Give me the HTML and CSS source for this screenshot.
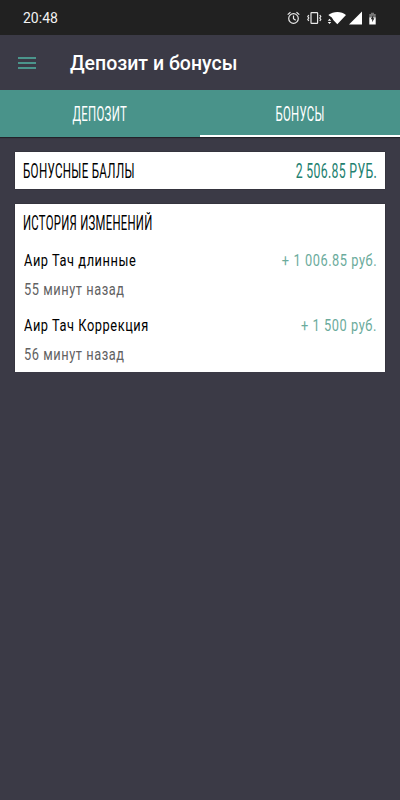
FILE: index.html
```
<!DOCTYPE html>
<html lang="ru">
<head>
  <meta charset="utf-8">
  <title>Депозит и бонусы</title>
  <link rel="stylesheet" href="styles.css">
</head>
<body>
  <div class="status-bar">
    <span class="time">20:48</span>
    <svg class="status-icons" width="94" height="16" viewBox="0 0 94 16">
      <!-- alarm -->
      <g fill="none" stroke="#e8e8e8" stroke-width="1.2">
        <circle cx="6.500" cy="8.500" r="4.800"/>
        <path d="M6.500 5.500v3.200l2.200 1.500M.7 4.600l2.800-2.400M12.300 4.600L9.500 2.200"/>
      </g>
      <!-- vibration -->
      <g fill="none" stroke="#e8e8e8" stroke-width="1.2">
        <rect x="24" y="2.600" width="6.600" height="10.800" rx=".6"/>
        <path d="M21.800 5l-1 1.500 1 1.500-1 1.500 1 1.500M32.800 5l1 1.500-1 1.500 1 1.500-1 1.500"/>
      </g>
      <!-- wifi, signal -->
      <path fill="#fff" d="M41.300 5C46.500 .9 54.500 .9 59 5L50.300 14.300 46.500 10.300 44.800 7.500z"/>
      <path fill="#fff" d="M40.800 10.700h3.400l-1.700-2zM40.800 12h3.400l-1.700 2z"/>
      <path fill="#fff" d="M75 1.600v13H62z"/>
      <!-- battery -->
      <path fill="#777" d="M82.300 4h1.700V2.700h3V4h1.700v4h-6.400z"/>
      <path fill="#fff" d="M82.300 7.500h6.400v7h-6.400z"/>
      <path fill="#222" d="M86.200 5l-2.500 4.300h1.500v3l2.200-4.100h-1.200z"/>
    </svg>
  </div>

  <div class="header">
    <div class="menu">
      <span></span>
      <span></span>
      <span></span>
    </div>
    <h1>Депозит и бонусы</h1>
  </div>

  <div class="tabs">
    <div class="tab"><span class="caps">ДЕПОЗИТ</span></div>
    <div class="tab active"><span class="caps">БОНУСЫ</span></div>
  </div>

  <div class="card balance">
    <span class="caps balance-title">БОНУСНЫЕ БАЛЛЫ</span>
    <span class="caps right sum">2 506.85 РУБ.</span>
  </div>

  <div class="card history">
    <h2 class="caps history-title">ИСТОРИЯ ИЗМЕНЕНИЙ</h2>
    <div class="row">
      <span class="text">Аир Тач длинные</span>
      <span class="text right amount">+ 1 006.85 руб.</span>
    </div>
    <div class="row date"><span class="text">55 минут назад</span></div>
    <div class="row second">
      <span class="text">Аир Тач Коррекция</span>
      <span class="text right amount">+ 1 500 руб.</span>
    </div>
    <div class="row date"><span class="text">56 минут назад</span></div>
  </div>
</body>
</html>
```
FILE: styles.css
```
body {
  margin: 0;
  background-color: #3b3a46;
  font-family: Roboto, sans-serif;
}

.status-bar {
  display: flex;
  justify-content: space-between;
  align-items: center;
  box-sizing: border-box;
  height: 35px;
  padding: 1px 19px 0 23px;
  background-color: #212121;
  color: #f2f2f2;
}

.time {
  font-size: 14px;
  line-height: 16px;
}

.header {
  display: flex;
  align-items: center;
  height: 55px;
  padding-left: 18px;
}

.menu {
  display: flex;
  flex-direction: column;
  gap: 3px;
  width: 18px;
  margin-right: 34px;
}

.menu span {
  height: 2px;
  background-color: #4b958c;
}

h1 {
  margin: 0;
  padding-top: 2px;
  color: #ffffff;
  font-size: 19.5px;
  font-weight: 500;
}

.tabs {
  display: flex;
  height: 47px;
  background-color: #49938a;
  box-shadow: 0 1px 1px rgba(0, 0, 0, 0.4);
}

.tab {
  display: flex;
  flex: 1;
  justify-content: center;
  align-items: center;
  box-sizing: border-box;
  padding-top: 4px;
  color: #ffffff;
  border-bottom: 2px solid transparent;
}

.tab.active {
  border-bottom-color: #ffffff;
}

/* narrow capitals */
.caps {
  display: inline-block;
  font-size: 19.5px;
  font-weight: 400;
  line-height: 22px;
  letter-spacing: 0.5px;
  white-space: nowrap;
  transform: scaleX(0.585);
  transform-origin: left center;
}

.tab .caps {
  transform-origin: center;
}

.card {
  box-sizing: border-box;
  margin: 15px 15px 0;
  padding: 0 8px;
  background-color: #ffffff;
  color: #000000;
  box-shadow: 0 0 1px rgba(0, 0, 0, 0.6);
}

.balance {
  display: flex;
  justify-content: space-between;
  align-items: center;
  height: 37px;
  padding-top: 2px;
}

.balance-title {
  transform: scaleX(0.595);
}

.sum {
  color: #22806f;
  transform: scaleX(0.63);
}

.history {
  height: 168px;
  padding-top: 9px;
}

.history-title {
  display: block;
  margin: 0 0 14px;
  transform: scaleX(0.58);
}

.row {
  display: flex;
  justify-content: space-between;
  height: 24px;
}

.row.date {
  margin-top: 5px;
  color: #626262;
}

.row.second {
  margin-top: 12px;
}

.text {
  margin-left: 1px;
  font-size: 16px;
  line-height: 24px;
  letter-spacing: 0.7px;
  white-space: nowrap;
  transform: scaleX(0.8);
  transform-origin: left center;
}

.right {
  transform-origin: right center;
}

.amount {
  color: #6bab9c;
}
```
